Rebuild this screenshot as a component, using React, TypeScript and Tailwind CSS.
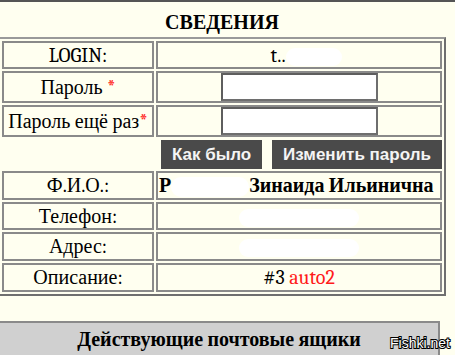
import React from 'react';

const cell = 'border-2 border-[#8a8a8a] p-0 align-middle font-serif';

function Blob({ w, h = 18 }: { w: number; h?: number }) {
  return (
    <span
      className="inline-block rounded-full bg-white align-middle"
      style={{ width: w, height: h }}
    />
  );
}

function PasswordBox() {
  return (
    <div className="flex justify-center">
      <input
        type="password"
        readOnly
        className="h-[28px] w-[157px] border-2 border-t-[#5e5e5e] border-l-[#5e5e5e] border-r-[#6e6e6e] border-b-[#6e6e6e] bg-white outline-none"
      />
    </div>
  );
}

export default function App() {
  return (
    <div className="relative h-[355px] w-[455px] overflow-hidden bg-[#fffff0] font-serif text-black">
      <div className="h-[2px] bg-[#555]" />

      {/* Title */}
      <div className="-ml-[2px] w-[448px] pt-[9px] text-center font-serif text-[20px] leading-[23px] font-bold">
        СВЕДЕНИЯ
      </div>

      {/* Details table */}
      <table className="-ml-[2px] mt-[3px] w-[448px] border-separate border-spacing-[2px] border-2 border-t-[#9a9a9a] border-l-[#9a9a9a] border-r-[#6f6f6f] border-b-[#6f6f6f] font-serif text-[20px] leading-[23px]">
        <tbody>
          <tr className="h-[28px]">
            <td className={`${cell} w-[152px] text-center`}>LOGIN:</td>
            <td className={`${cell} text-center`}>
              <span className="pl-[14px] font-serif">t..</span>
              <Blob w={56} />
            </td>
          </tr>
          <tr className="h-[32px]">
            <td className={`${cell} text-center`}>
              Пароль <span className="font-serif text-[#ff1a1a]">*</span>
            </td>
            <td className={cell}>
              <PasswordBox />
            </td>
          </tr>
          <tr className="h-[32px]">
            <td className={`${cell} text-center whitespace-nowrap`}>
              Пароль ещё раз<span className="font-serif text-[#ff1a1a]">*</span>
            </td>
            <td className={cell}>
              <PasswordBox />
            </td>
          </tr>
          <tr className="h-[30px]">
            <td className="p-0" />
            <td className="p-0">
              <div className="flex justify-end gap-[10px] [font-family:Liberation_Sans,Arial,sans-serif] text-[17px] font-bold text-[#f4f4f4]">
                <div className="flex h-[29px] w-[101px] items-center justify-center bg-[#4a4a4a]">
                  Как было
                </div>
                <div className="flex h-[29px] w-[170px] items-center justify-center bg-[#4a4a4a]">
                  Изменить пароль
                </div>
              </div>
            </td>
          </tr>
          <tr className="h-[29px]">
            <td className={`${cell} text-center`}>Ф.И.О.:</td>
            <td className={`${cell} whitespace-nowrap pl-[1px] font-bold`}>
              Р<Blob w={78} h={20} />
              Зинаида Ильинична
            </td>
          </tr>
          <tr className="h-[28px]">
            <td className={`${cell} text-center`}>Телефон:</td>
            <td className={`${cell} text-center`}>
              <Blob w={120} />
            </td>
          </tr>
          <tr className="h-[29px]">
            <td className={`${cell} text-center`}>Адрес:</td>
            <td className={`${cell} text-center`}>
              <Blob w={120} />
            </td>
          </tr>
          <tr className="h-[29px]">
            <td className={`${cell} text-center`}>Описание:</td>
            <td className={`${cell} text-center`}>
              #3 <span className="font-serif text-[#ff1a1a]">auto2</span>
            </td>
          </tr>
        </tbody>
      </table>

      {/* Mailboxes header */}
      <div className="-ml-[2px] mt-[25px] w-[442px] border-2 border-[#8a8a8a] bg-[#d0d0d0] pt-[5px] pb-[10px] text-center font-serif text-[20px] leading-[23px] font-bold">
        Действующие почтовые ящики
      </div>

      {/* watermark */}
      <div className="absolute left-[390px] top-[335px] [font-family:Liberation_Sans,Arial,sans-serif] text-[14px] leading-[16px] text-white [-webkit-text-stroke:2px_#000] [paint-order:stroke_fill]">
        Fishki.net
      </div>
    </div>
  );
}
